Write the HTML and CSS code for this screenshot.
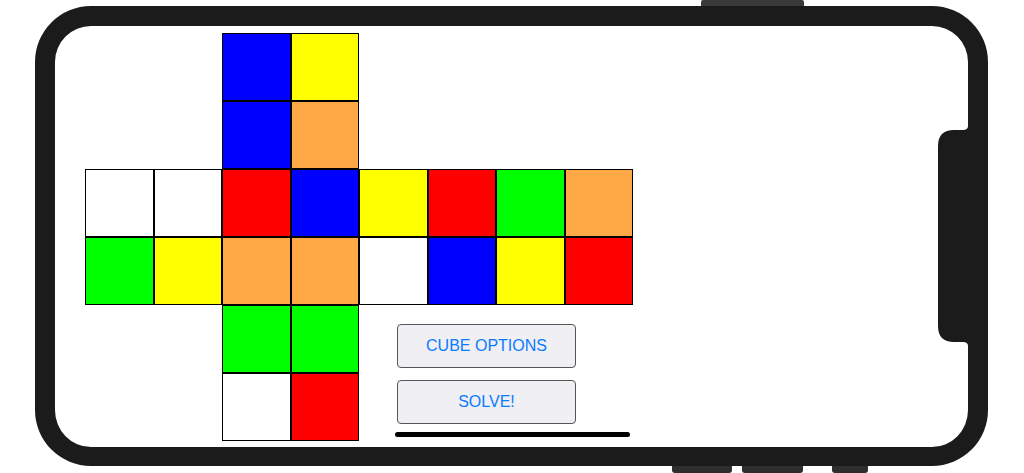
FILE: index.html
```html
<!DOCTYPE html>
<html>
<head>
<meta charset="utf-8">
<link rel="stylesheet" href="styles.css">
</head>
<body>
<div class="device">
  <div class="btn-top"></div>
  <div class="btn-bottom b1"></div>
  <div class="btn-bottom b2"></div>
  <div class="btn-bottom b3"></div>
  <div class="phone">
    <div class="screen">
      <div class="cube">
        <div class="panel">
          <button class="action">CUBE OPTIONS</button>
          <button class="action">SOLVE!</button>
        </div>
        <!-- row 1 -->
        <div class="empty"></div><div class="empty"></div>
        <div class="cell blue"></div><div class="cell yellow"></div>
        <div class="empty"></div><div class="empty"></div><div class="empty"></div><div class="empty"></div>
        <!-- row 2 -->
        <div class="empty"></div><div class="empty"></div>
        <div class="cell blue"></div><div class="cell orange"></div>
        <div class="empty"></div><div class="empty"></div><div class="empty"></div><div class="empty"></div>
        <!-- row 3 -->
        <div class="cell white"></div><div class="cell white"></div>
        <div class="cell red"></div><div class="cell blue"></div>
        <div class="cell yellow"></div><div class="cell red"></div>
        <div class="cell green"></div><div class="cell orange"></div>
        <!-- row 4 -->
        <div class="cell green"></div><div class="cell yellow"></div>
        <div class="cell orange"></div><div class="cell orange"></div>
        <div class="cell white"></div><div class="cell blue"></div>
        <div class="cell yellow"></div><div class="cell red"></div>
        <!-- row 5 -->
        <div class="empty"></div><div class="empty"></div>
        <div class="cell green"></div><div class="cell green"></div>
        <!-- row 6 -->
        <div class="empty"></div><div class="empty"></div>
        <div class="cell white"></div><div class="cell red"></div>
      </div>
    </div>
    <svg class="notch" width="30" height="220" viewBox="0 0 30 220">
      <path d="M30 0 Q30 4 25 4 L16 4 Q0 4 0 20 L0 200 Q0 216 16 216 L25 216 Q30 216 30 220 Z" fill="#1b1b1b"/>
    </svg>
    <div class="home-indicator"></div>
  </div>
</div>
</body>
</html>
```
FILE: styles.css
```css
html, body {
  margin: 0;
  padding: 0;
  background: #fff;
}
.device {
  position: relative;
  width: 1024px;
  height: 473px;
  overflow: hidden;
}
.btn-top {
  position: absolute;
  left: 701px;
  top: 0;
  width: 103px;
  height: 8px;
  background: #3a3a3a;
  border-radius: 2px 2px 0 0;
}
.btn-bottom {
  position: absolute;
  top: 464px;
  height: 9px;
  background: #2e2e2e;
  border-radius: 0 0 3px 3px;
}
.b1 { left: 672px; width: 60px; }
.b2 { left: 742px; width: 61px; }
.b3 { left: 832px; width: 36px; }
.phone {
  position: relative;
  margin: 6px 0 0 35px;
  width: 913px;
  height: 421px;
  border: 20px solid #1b1b1b;
  border-bottom-width: 19px;
  border-radius: 56px;
  background: #fff;
}
.screen {
  padding: 7px 0 0 30px;
}
.cube {
  display: grid;
  grid-template-columns: repeat(8, 68.5px);
  grid-template-rows: repeat(6, 68px);
}
.cell {
  box-sizing: border-box;
  border: 1px solid #000;
}
.white { background: #ffffff; }
.blue { background: #0000ff; }
.yellow { background: #ffff00; }
.orange { background: #ffa946; }
.red { background: #ff0000; }
.green { background: #00ff00; }
.panel {
  grid-column: 5 / 9;
  grid-row: 5 / 7;
  display: flex;
  flex-direction: column;
  gap: 12px;
  padding: 19px 0 0 38px;
}
.action {
  box-sizing: border-box;
  width: 179px;
  height: 44px;
  background: #efeff4;
  border: 1px solid #555;
  border-radius: 4px;
  color: #0a7bff;
  font-family: "Liberation Sans", Arial, sans-serif;
  font-size: 16px;
  padding: 0;
  margin: 0;
}
.notch {
  position: absolute;
  right: 0;
  top: 100px;
  display: block;
}
.home-indicator {
  position: absolute;
  left: 340px;
  bottom: 10px;
  width: 235px;
  height: 5px;
  border-radius: 3px;
  background: #000;
}
```
